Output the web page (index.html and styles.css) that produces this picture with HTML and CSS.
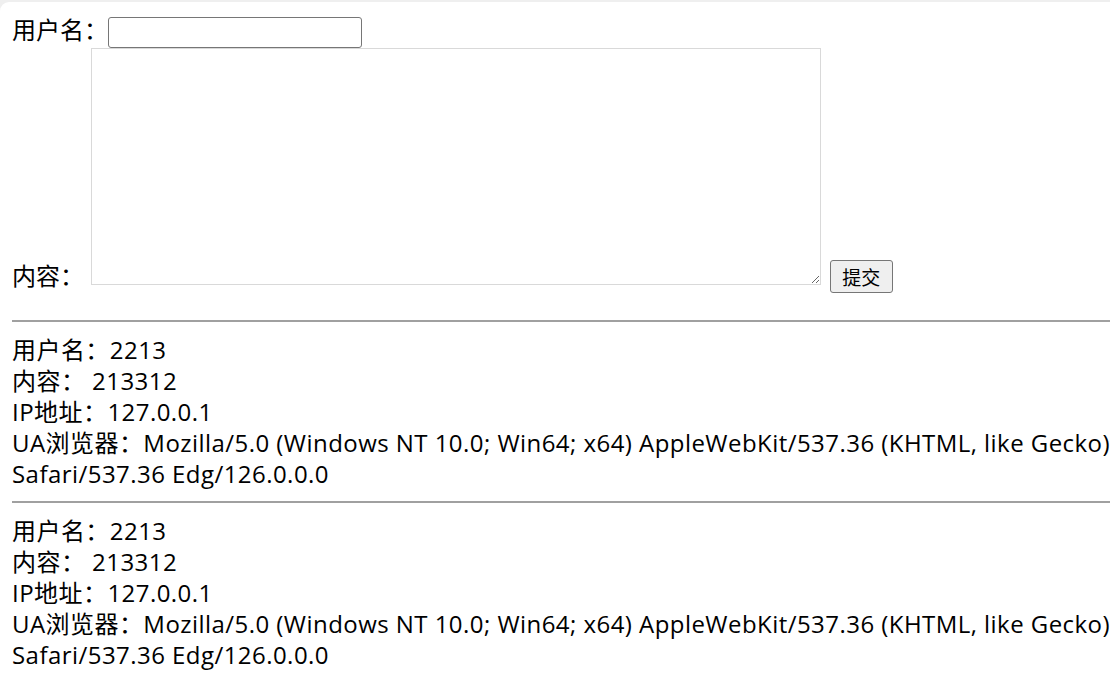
FILE: index.html
```html
<!DOCTYPE html>
<html lang="zh">
<head>
<meta charset="utf-8">
<title>留言板</title>
<link rel="stylesheet" href="styles.css">
</head>
<body>
<div class="window">
  <div class="page">
    <form class="msg-form">
      <label class="field">用户名：<input class="text-input" type="text" name="username"></label><br>
      <label class="field">内容：<textarea class="content-input" name="content"></textarea></label>
      <button class="submit-btn" type="submit">提交</button>
    </form>
    <hr class="divider">
    <div class="record">
      用户名：2213<br>
      内容： 213312<br>
      IP地址：127.0.0.1<br>
      UA浏览器：Mozilla/5.0 (Windows NT 10.0; Win64; x64) AppleWebKit/537.36 (KHTML, like Gecko) Chrome/126.0.0.0 Safari/537.36 Edg/126.0.0.0
    </div>
    <hr class="divider">
    <div class="record">
      用户名：2213<br>
      内容： 213312<br>
      IP地址：127.0.0.1<br>
      UA浏览器：Mozilla/5.0 (Windows NT 10.0; Win64; x64) AppleWebKit/537.36 (KHTML, like Gecko) Chrome/126.0.0.0 Safari/537.36 Edg/126.0.0.0
    </div>
  </div>
</div>
</body>
</html>
```

FILE: styles.css
```css
html {
  background: #efefef;
  overflow: hidden;
}
body {
  margin: 0;
  overflow: hidden;
  height: 698px;
}
.window {
  margin-top: 2px;
  background: #ffffff;
  border-top-left-radius: 9px;
  height: 696px;
  padding: 12px 0 0 12px;
  box-sizing: border-box;
  overflow: hidden;
}
.page {
  width: 1420px;
  font-family: "Open Sans", "Noto Sans CJK SC", sans-serif;
  font-size: 24px;
  letter-spacing: 0.45px;
  line-height: 31px;
  color: #000;
}
.msg-form {
  margin: 0;
  padding-bottom: 15px;
}
.field {
  letter-spacing: 0;
}
.text-input {
  width: 254px;
  height: 31px;
  box-sizing: border-box;
  border: 1px solid #767676;
  border-radius: 3px;
  vertical-align: middle;
  padding: 1px 3px;
  font-size: 20px;
}
.content-input {
  width: 730px;
  height: 237px;
  box-sizing: border-box;
  border: 1px solid #d9d9d9;
  margin: 0 0 0 7px;
  font-size: 20px;
  padding: 3px;
}
.submit-btn {
  width: 63px;
  height: 33px;
  box-sizing: border-box;
  background: #efefef;
  border: 1px solid #767676;
  border-radius: 3px;
  font-family: "Noto Sans CJK SC", sans-serif;
  font-size: 19px;
  letter-spacing: 0;
  line-height: 1;
  padding: 0;
  margin-left: 2px;
  color: #000;
}
.divider {
  margin: 12px 0;
  border: 0;
  border-top: 2px solid #a0a0a0;
  height: 0;
}
.record {
  margin: 0;
}
```
